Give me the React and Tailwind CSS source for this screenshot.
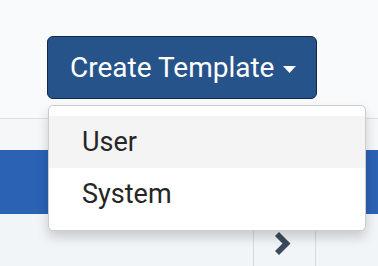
export default function App() {
  return (
    <div className="relative w-[378px] h-[266px] overflow-hidden bg-[#f9fafc]" style={{ fontFamily: "Roboto, 'Liberation Sans', sans-serif" }}>
      <div className="h-[118px] pt-[36px] pl-[47px]">
        <button className="flex items-center h-[63px] w-[270px] pl-[22px] rounded-[6px] border border-[#10284a] bg-[#27538b] text-white text-[28px] leading-none">
          <span>Create Template</span>
          <svg width="13" height="7" viewBox="0 0 13 7" className="ml-[9px] mt-[3px]">
            <polygon points="0,0 13,0 6.5,7" fill="white" />
          </svg>
        </button>
      </div>
      <div className="h-[1px] bg-[#dde1e6]" />
      <div className="h-[31px] bg-[#f6f7f9]" />
      <div className="h-[64px] bg-[#2b62b3]" />
      <div className="flex h-[52px] bg-[#f2f5f8]">
        <div className="w-[253px]" />
        <div className="w-[63px] border-l border-r border-[#d5d9de] flex items-start justify-center pt-[18px]">
          <svg width="17" height="23" viewBox="0 0 17 23" className="-ml-[3px]">
            <polygon points="0,4 4,0 15.5,11.5 4,23 0,19 7.5,11.5" fill="#3a4b5c" />
          </svg>
        </div>
        <div className="flex-1" />
      </div>
      <div className="absolute left-[48px] top-[105px] w-[318px] h-[126px] rounded-[5px] border border-[#cccccc] bg-white py-[10px] shadow-[0_6px_12px_rgba(0,0,0,0.175)]">
        <div className="h-[52px] flex items-center pl-[33px] bg-[#f4f4f4] text-[27px] text-[#262626]">User</div>
        <div className="h-[52px] flex items-center pl-[33px] text-[27px] text-[#262626]">System</div>
      </div>
    </div>
  );
}
